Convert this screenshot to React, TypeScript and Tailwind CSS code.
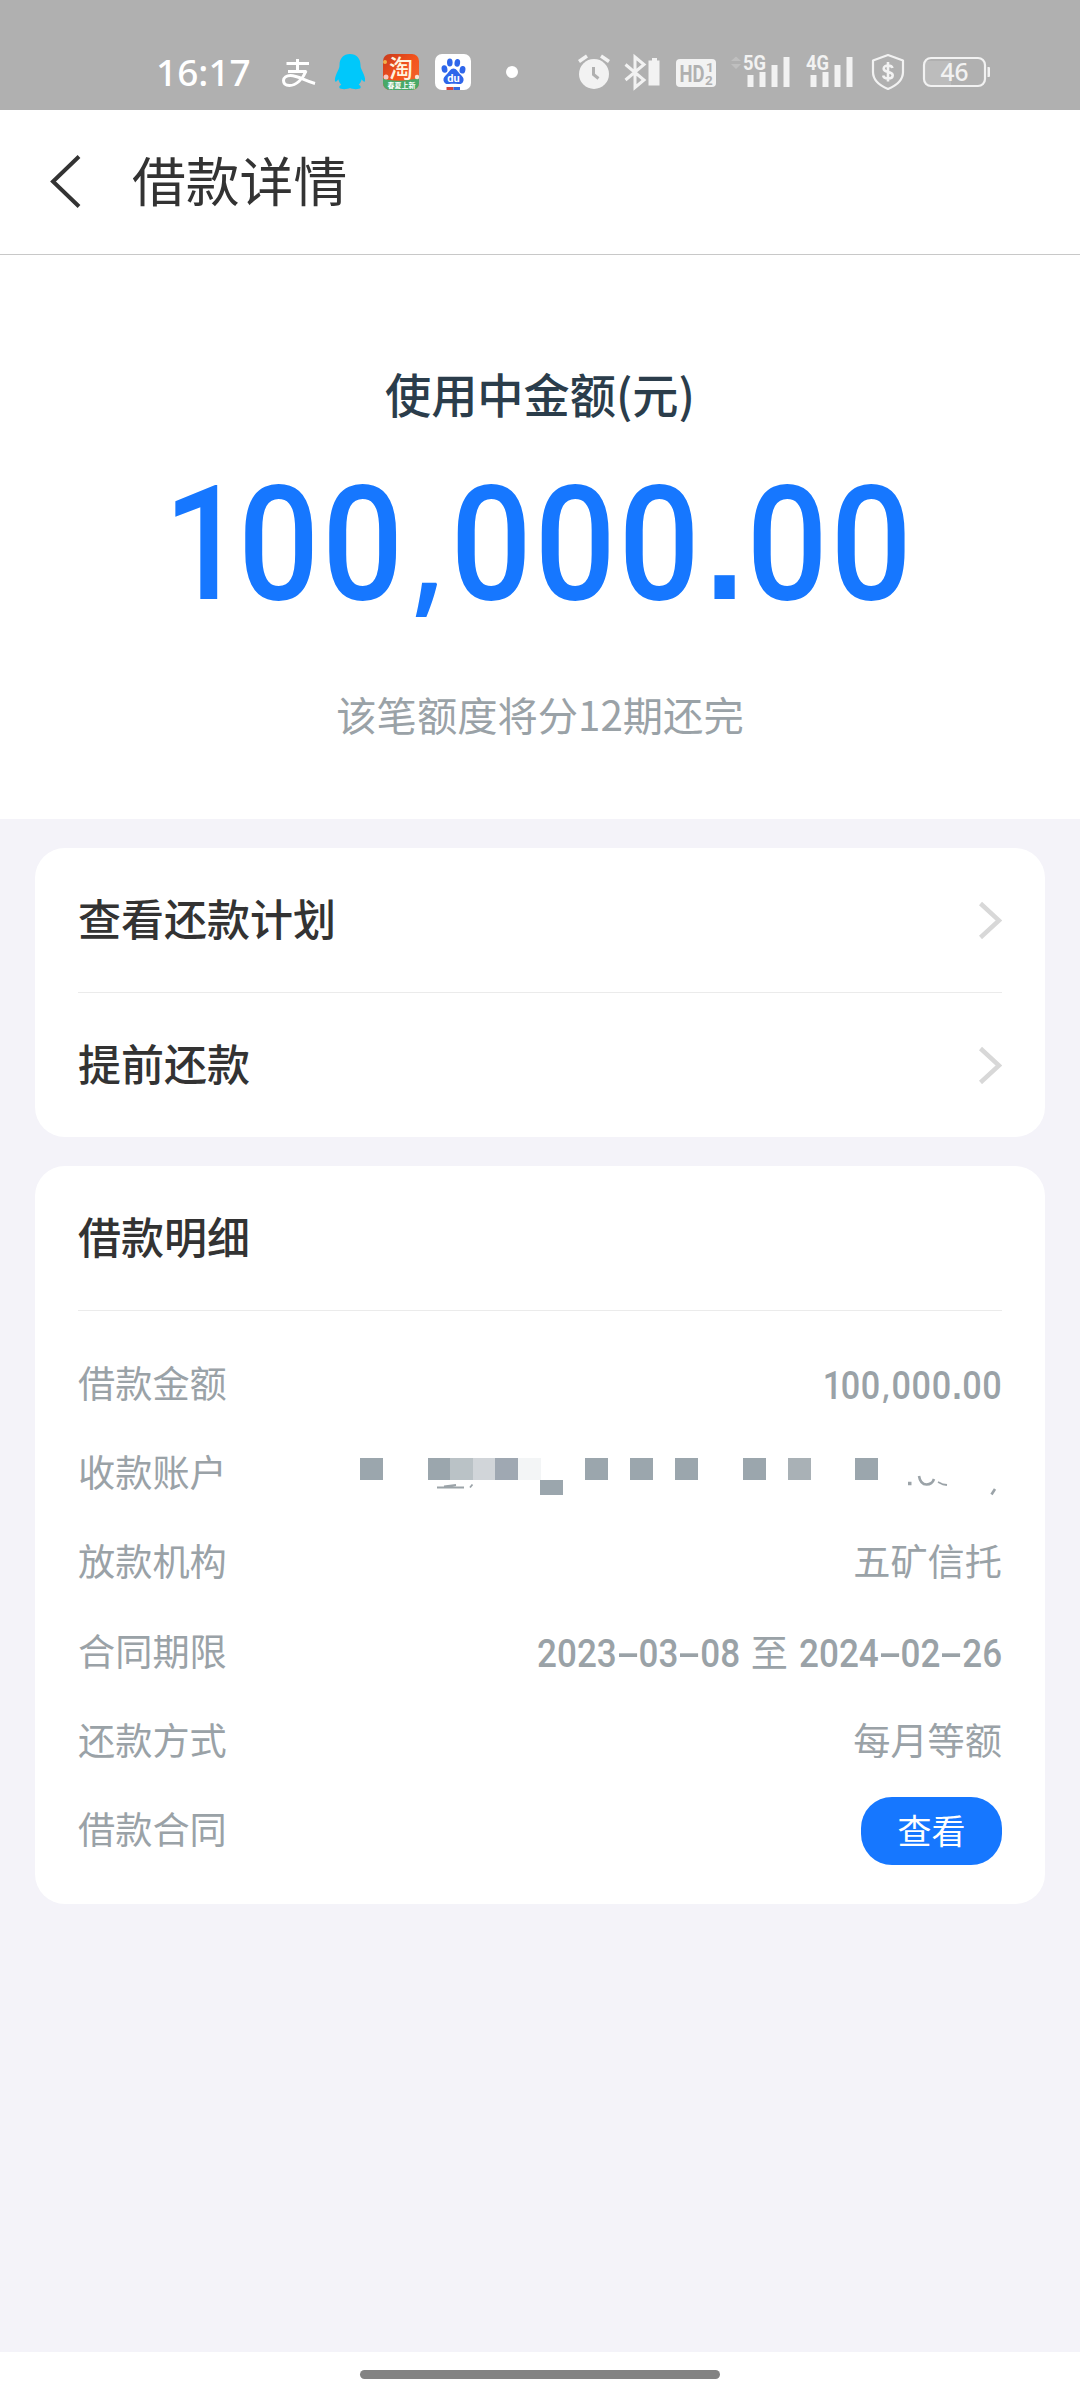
import React from "react";

const ACTIONS = ["查看还款计划", "提前还款"];

const MOSAIC = [
  { x: 0, y: 0, h: 22, color: "#9ba6ad" },
  { x: 68, y: 0, h: 22, color: "#9ba6ad" },
  { x: 90, y: 0, h: 22, color: "#bac2c6" },
  { x: 113, y: 0, h: 22, color: "#d1d5d9" },
  { x: 135, y: 0, h: 22, color: "#9fa8b2" },
  { x: 158, y: 0, h: 22, color: "#f3f5f6" },
  { x: 180, y: 22, h: 15, color: "#9ba6ad" },
  { x: 225, y: 0, h: 22, color: "#9ba6ad" },
  { x: 270, y: 0, h: 22, color: "#9ba6ad" },
  { x: 315, y: 0, h: 22, color: "#9ba6ad" },
  { x: 383, y: 0, h: 22, color: "#9ba6ad" },
  { x: 428, y: 0, h: 22, color: "#a9b1b6" },
  { x: 495, y: 0, h: 22, color: "#9ba6ad" },
];

interface SignalProps {
  label: string;
  className?: string;
}

function Signal({ label, className = "" }: SignalProps) {
  return (
    <svg className={className} width="48" height="40" viewBox="0 0 48 40" fill="#f2f2f2">
      <text
        x="0"
        y="18"
        fontFamily="Roboto, sans-serif"
        fontSize="21"
        fontWeight="700"
        textLength="23"
        lengthAdjust="spacingAndGlyphs"
      >
        {label}
      </text>
      <rect x="4.500" y="23" width="6" height="12" />
      <rect x="16.500" y="20" width="6" height="15" />
      <rect x="28.500" y="13" width="6" height="22" />
      <rect x="40.500" y="5" width="6" height="30" />
    </svg>
  );
}

function StatusBar() {
  return (
    <div className="flex h-[110px] shrink-0 items-start bg-[#b0b0b0] pt-[52px] pl-[156px]">
      <div className="w-[126px] font-['Noto_Sans',sans-serif] text-[37px] leading-[40px] font-medium text-white">
        16:17
      </div>

      {/* Alipay */}
      <svg width="34" height="40" viewBox="0 0 34 40" fill="none" stroke="#fff" strokeWidth="3">
        <path d="M4.500 11.500H27M15.500 7v13M6 19.500h18.500" />
        <path d="M24 19C21 27 14 33.500 7.500 33.500 3 33.500 1.500 31 1.500 28.500c0-3 3-5 7-5C16 23.500 22 28.500 33 31.500" />
      </svg>

      {/* QQ */}
      <svg className="ml-[18px]" width="31" height="40" viewBox="0 0 31 40" fill="#00c8fb">
        <path d="M16 2C9.500 2 5.500 6.500 5.500 13c0 2-.5 3.500-1.500 5.500C2 22.500.5 26 1 29c.3 1.500 2 .5 3.300-1.800.5 2.300 1.500 4 3 5.600C5.500 33.500 5 34.500 5.500 36c1 1.500 8 1.500 10.500 0 2.500 1.500 9.500 1.500 10.500 0 .5-1.500 0-2.500-1.800-3.200 1.500-1.600 2.500-3.300 3-5.600C29 29.500 30.700 30.500 31 29c.5-3-1-6.500-3-10.500-1-2-1.500-3.500-1.500-5.500C26.500 6.500 22.500 2 16 2z" />
      </svg>

      {/* Taobao */}
      <svg className="ml-[18px] overflow-visible" width="37" height="40" viewBox="0 0 37 40">
        <defs>
          <clipPath id="taobao">
            <rect y="2" width="36" height="36" rx="7" />
          </clipPath>
          <linearGradient id="taobao-bg" x1="0" y1="0" x2="1" y2="1">
            <stop offset="0" stopColor="#c83a1c" />
            <stop offset=".5" stopColor="#f4531c" />
            <stop offset="1" stopColor="#f06a32" />
          </linearGradient>
        </defs>
        <g clipPath="url(#taobao)">
          <rect y="2" width="36" height="36" fill="url(#taobao-bg)" />
          <path d="M0 26.500c8 3 26 3 36-1v13H0z" fill="#48a968" />
          <circle cx="2" cy="10" r="2" fill="#f3b04a" />
          <circle cx="3" cy="25" r="2.500" fill="#f6c9c0" />
          <circle cx="34" cy="25" r="2.200" fill="#fbe3d0" />
        </g>
        <text
          x="18"
          y="25"
          fill="#fff3df"
          fontFamily="'Noto Sans CJK SC', sans-serif"
          fontSize="24"
          fontWeight="500"
          textAnchor="middle"
        >
          淘
        </text>
        <text
          x="18.500"
          y="36"
          fill="#fff"
          fontFamily="'Noto Sans CJK SC', sans-serif"
          fontSize="7"
          fontWeight="700"
          textAnchor="middle"
        >
          春夏上新
        </text>
      </svg>

      {/* Baidu */}
      <svg className="ml-[15px]" width="36" height="40" viewBox="0 0 36 40">
        <rect y="2" width="36" height="36" rx="7" fill="#fff" />
        <g fill="#2f66ea">
          <ellipse cx="9.500" cy="17" rx="2.900" ry="3.800" transform="rotate(-12 9.500 17)" />
          <ellipse cx="14.800" cy="10.500" rx="2.800" ry="3.900" />
          <ellipse cx="22.300" cy="10.800" rx="2.800" ry="3.900" transform="rotate(8 22.300 10.800)" />
          <ellipse cx="27.500" cy="17.800" rx="2.900" ry="3.800" transform="rotate(12 27.500 17.800)" />
          <path d="M18.500 16.500c3 0 4.500 3.500 6.500 5.500 2.500 2.300 4 4 3.500 6.500-.6 3-3 4-5.500 3.500-3-.5-6-.5-9 0-2.500.5-5-.7-5.500-3.500-.5-2.500 1-4.200 3.500-6.500 2-2 3.500-5.500 6.500-5.500z" />
        </g>
        <text x="18.500" y="29.500" fill="#fff" fontFamily="Roboto, sans-serif" fontSize="11" fontWeight="700" textAnchor="middle">
          du
        </text>
        <path d="M11.500 35h7v3h-7z" fill="#d4453b" />
        <path d="M18.500 35h6.500v3h-6.500z" fill="#3468dc" />
      </svg>

      <div className="mt-[14px] ml-[35px] h-3 w-3 rounded-full bg-white" />

      {/* Alarm */}
      <svg className="ml-[60px]" width="33" height="40" viewBox="0 0 33 40" fill="none">
        <circle cx="16" cy="22" r="15" fill="#f2f2f2" />
        <path d="M1 9.500l8-5.500M31 9.500L23 4" stroke="#f2f2f2" strokeWidth="3.500" />
        <path d="M15.500 15v7.500l5 4" stroke="#b0b0b0" strokeWidth="3" />
      </svg>

      {/* Bluetooth with device battery */}
      <svg className="ml-[13px]" width="37" height="40" viewBox="0 0 37 40" fill="none">
        <path d="M1.500 12.500L20 28l-9 7.500V5l9 7.500L1.500 28" stroke="#f2f2f2" strokeWidth="3" />
        <path d="M25 8.500h3V6h5v2.500h2.500V33.500H24.500V8.500z" fill="#f2f2f2" />
      </svg>

      {/* HD voice */}
      <svg className="ml-[15px]" width="40" height="40" viewBox="0 0 40 40">
        <rect y="7" width="40" height="28" rx="4" fill="#f2f2f2" />
        <g fill="#b0b0b0" fontFamily="Roboto, sans-serif">
          <text x="3.500" y="29.500" fontSize="23" fontWeight="700" textLength="25" lengthAdjust="spacingAndGlyphs">
            HD
          </text>
          <text x="30" y="20" fontSize="13.500" fontWeight="700">
            1
          </text>
          <text x="29" y="32.500" fontSize="13.500" fontWeight="700">
            2
          </text>
        </g>
      </svg>

      <svg className="ml-[14px]" width="12" height="40" viewBox="0 0 12 40" fill="#bfbfbf">
        <path d="M1 9l5-4.500L11 9zM1 12h10l-5 5z" />
      </svg>
      <Signal label="5G" className="ml-[1px]" />
      <Signal label="4G" className="ml-[15px]" />

      {/* Payment protection */}
      <svg className="ml-[17px]" width="34" height="40" viewBox="0 0 34 40" fill="none" stroke="#f2f2f2">
        <path d="M17 3l15 5.500V20c0 8-6.500 13.500-15 17C8.500 33.500 2 28 2 20V8.500z" strokeWidth="2.200" strokeLinejoin="round" />
        <path d="M21.500 16c-.5-1.700-2.300-2.500-4.500-2.500s-4.300 1-4.300 3.200c0 4.200 9 2.400 9 6.600 0 2.200-2.200 3.200-4.700 3.200s-4.500-1-4.800-3M17 10v19.500" strokeWidth="2.600" />
      </svg>

      {/* Battery */}
      <svg className="ml-[17px]" width="70" height="40" viewBox="0 0 70 40">
        <path d="M3 9h26v24H9c-4 0-6-2-6-6z" fill="#bcbcbc" />
        <rect x="2" y="6" width="61" height="28" rx="7" fill="none" stroke="#f2f2f2" strokeWidth="2.200" />
        <path d="M65.500 15h1.500q1 0 1 1v8q0 1-1 1h-1.500z" fill="#f2f2f2" />
        <text x="32.500" y="29" fill="#f2f2f2" fontFamily="'Noto Sans', sans-serif" fontSize="24.500" fontWeight="500" textAnchor="middle">
          46
        </text>
      </svg>
    </div>
  );
}

interface AmountProps {
  className?: string;
}

// Sizes are in em, so the same markup serves the headline and the detail row.
function Amount({ className = "" }: AmountProps) {
  return (
    <span
      className={`inline-block scale-x-[0.9] font-[Roboto,sans-serif] font-medium tracking-[0.019em] whitespace-nowrap ${className}`}
    >
      <span className="mr-[-0.067em]">1</span>
      00
      <span className="inline-block w-[0.310em] text-center font-['Open_Sans',sans-serif] leading-none font-semibold tracking-normal">
        <span className="text-[0.880em]">,</span>
      </span>
      000
      <span className="inline-block w-[0.306em] text-center font-['Liberation_Sans',sans-serif] leading-none font-bold tracking-normal">
        .
      </span>
      <span className="mr-[-0.019em]">00</span>
    </span>
  );
}

// Digits are condensed; the negative margin takes back the width that the scaling frees.
function DateText({ value }: { value: string }) {
  return (
    <span className="ml-[-20px] inline-block origin-right scale-x-[0.910] pt-[2px] font-[Roboto,sans-serif] text-[38.500px] font-medium">
      {value.split("-").map((part, i) => (
        <React.Fragment key={i}>
          {i > 0 && <span className="inline-block w-[24px] scale-x-[2] text-center">-</span>}
          {part}
        </React.Fragment>
      ))}
    </span>
  );
}

function MaskedAccount() {
  return (
    <div className="relative h-[40px] w-[642px]">
      {MOSAIC.map((cell) => (
        <div
          key={cell.x}
          className="absolute w-[23px]"
          style={{ left: cell.x, top: cell.y + 4, height: cell.h, backgroundColor: cell.color }}
        />
      ))}
      <svg className="absolute top-[-1px] left-0" width="642" height="50" viewBox="0 0 642 50" fill="none" stroke="#9ba3a8">
        <path d="M77 34.500h27M84 33.500l12-1.500M110 34.500l2.500-3" strokeWidth="1.800" />
        <path d="M548 30.500h3.500" strokeWidth="3.500" />
        <path d="M559 23c1 6 4 8.500 7.500 8.500S573 29 574 26" strokeWidth="2.600" />
        <path d="M578 29l5 2.500 4 .5" strokeWidth="1.800" />
        <path d="M635 36l-3.500 5.500" strokeWidth="2.600" />
      </svg>
    </div>
  );
}

interface DetailRowProps {
  label: string;
  children: React.ReactNode;
}

function DetailRow({ label, children }: DetailRowProps) {
  return (
    <div className="flex h-[89.300px] items-center justify-between">
      <span className="pb-[6px] whitespace-nowrap">{label}</span>
      {typeof children === "string" ? <span className="pb-[6px]">{children}</span> : children}
    </div>
  );
}

export default function App() {
  return (
    <div className="flex h-[2400px] w-[1080px] flex-col overflow-hidden bg-[#f4f3f9] font-['Noto_Sans_CJK_SC',sans-serif] text-[#333]">
      <StatusBar />

      <header className="flex h-[145px] shrink-0 items-center border-b border-[#c8c8c8] bg-white pl-[50px]">
        <svg width="32" height="54" viewBox="0 0 32 54" fill="none" stroke="#333" strokeWidth="4">
          <path d="M29 1.500L3 26.500 29 51.500" />
        </svg>
        <h1 className="ml-[50px] pb-[6px] text-[53.800px] leading-[80px]">借款详情</h1>
      </header>

      <section className="flex h-[564px] shrink-0 flex-col items-center bg-white">
        <div className="mt-[103px] text-[46.200px] leading-[70px] font-medium text-[#2b3d4b]">
          使用中金额(元)
        </div>
        <Amount className="mt-[24px] mr-[4px] h-[186px] text-[159px] leading-[186px] text-[#1677ff]" />
        <div className="mt-[46px] text-[40.300px] leading-[60px] text-[#9aa2a7]">
          该笔额度将分12期还完
        </div>
      </section>

      <main className="grow px-[35px] pt-[29px]">
        <div className="h-[289px] rounded-[30px] bg-white px-[43px]">
          {ACTIONS.map((action, i) => (
            <div
              key={action}
              className={`flex h-[144px] items-center justify-between ${i > 0 ? "border-t border-[#ebebeb]" : ""}`}
            >
              <span className="pb-[6px] text-[43px] leading-[64px] font-medium">{action}</span>
              <svg width="24" height="38" viewBox="0 0 24 38" fill="none" stroke="#d8d8d8" strokeWidth="4.500">
                <path d="M2.500 2.500L21 19.500 2.500 36.500" />
              </svg>
            </div>
          ))}
        </div>

        <div className="mt-[29px] h-[738px] rounded-[30px] bg-white px-[43px]">
          <h2 className="flex h-[145px] items-center border-b border-[#ebebeb] pb-[6px] text-[43px] font-medium">
            借款明细
          </h2>
          <div className="pt-[29px] text-[37.200px] leading-[56px] text-[#9aa2a7]">
            <DetailRow label="借款金额">
              <Amount className="origin-right pt-[3px] text-[38px]" />
            </DetailRow>
            <DetailRow label="收款账户">
              <MaskedAccount />
            </DetailRow>
            <DetailRow label="放款机构">五矿信托</DetailRow>
            <DetailRow label="合同期限">
              <span className="flex items-center gap-[11px] whitespace-nowrap">
                <DateText value="2023-03-08" />
                <span className="pb-[4px]">至</span>
                <DateText value="2024-02-26" />
              </span>
            </DetailRow>
            <DetailRow label="还款方式">每月等额</DetailRow>
            <DetailRow label="借款合同">
              <button className="h-[68px] w-[141px] rounded-[31px] bg-[#1677ff] pb-[2px] text-[34px] leading-[66px] text-white">
                查看
              </button>
            </DetailRow>
          </div>
        </div>
      </main>

      <footer className="flex h-[48px] shrink-0 justify-center bg-white pt-[18px]">
        <div className="h-[9px] w-[360px] rounded-full bg-[#838383]" />
      </footer>
    </div>
  );
}
